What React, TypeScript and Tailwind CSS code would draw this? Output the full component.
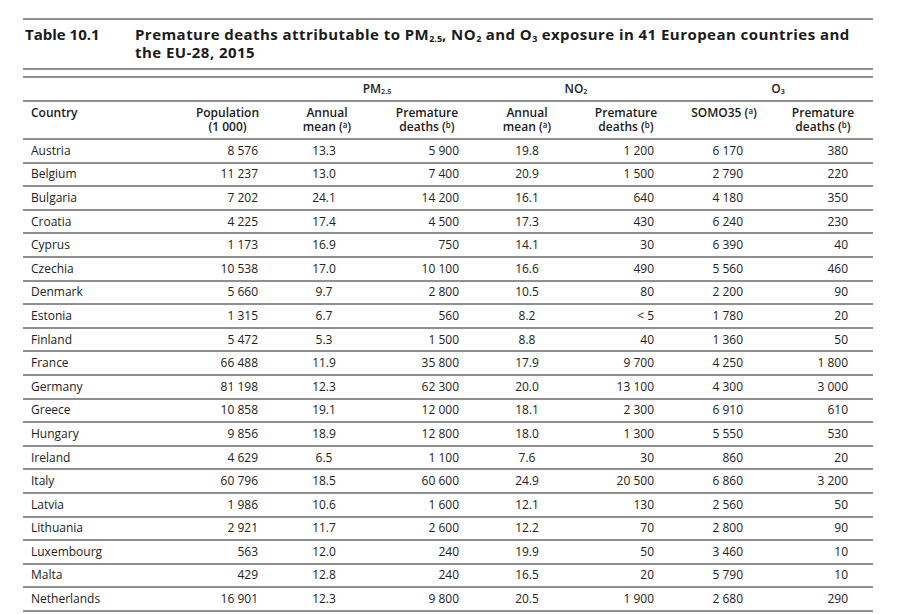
import React from 'react';

// widths of the eight columns, left to right
const COLS = ['w-[155px]', 'w-[99px]', 'w-[100px]', 'w-[100px]', 'w-[100px]', 'w-[98px]', 'w-[98px]', 'w-[100px]'];

// how each data column is aligned
const CELL = [
  'text-left pl-[8px]',
  'text-right pr-[19px]',
  'text-center pr-[6px]',
  'text-right pr-[18px]',
  'text-center',
  'text-right pr-[21px]',
  'text-right pr-[30px]',
  'text-right pr-[25px]',
];

const rows: string[][] = [
  ['Austria', '8 576', '13.3', '5 900', '19.8', '1 200', '6 170', '380'],
  ['Belgium', '11 237', '13.0', '7 400', '20.9', '1 500', '2 790', '220'],
  ['Bulgaria', '7 202', '24.1', '14 200', '16.1', '640', '4 180', '350'],
  ['Croatia', '4 225', '17.4', '4 500', '17.3', '430', '6 240', '230'],
  ['Cyprus', '1 173', '16.9', '750', '14.1', '30', '6 390', '40'],
  ['Czechia', '10 538', '17.0', '10 100', '16.6', '490', '5 560', '460'],
  ['Denmark', '5 660', '9.7', '2 800', '10.5', '80', '2 200', '90'],
  ['Estonia', '1 315', '6.7', '560', '8.2', '< 5', '1 780', '20'],
  ['Finland', '5 472', '5.3', '1 500', '8.8', '40', '1 360', '50'],
  ['France', '66 488', '11.9', '35 800', '17.9', '9 700', '4 250', '1 800'],
  ['Germany', '81 198', '12.3', '62 300', '20.0', '13 100', '4 300', '3 000'],
  ['Greece', '10 858', '19.1', '12 000', '18.1', '2 300', '6 910', '610'],
  ['Hungary', '9 856', '18.9', '12 800', '18.0', '1 300', '5 550', '530'],
  ['Ireland', '4 629', '6.5', '1 100', '7.6', '30', '860', '20'],
  ['Italy', '60 796', '18.5', '60 600', '24.9', '20 500', '6 860', '3 200'],
  ['Latvia', '1 986', '10.6', '1 600', '12.1', '130', '2 560', '50'],
  ['Lithuania', '2 921', '11.7', '2 600', '12.2', '70', '2 800', '90'],
  ['Luxembourg', '563', '12.0', '240', '19.9', '50', '3 460', '10'],
  ['Malta', '429', '12.8', '240', '16.5', '20', '5 790', '10'],
  ['Netherlands', '16 901', '12.3', '9 800', '20.5', '1 900', '2 680', '290'],
];

const Rule = () => <div className="h-[2px] bg-[#8f8f8f]" />;

// footnote marker: normal brackets, small raised letter
const Note = ({ c }: { c: string }) => (
  <span>
    (<span className="text-[8px] leading-none align-[3px]">{c}</span>)
  </span>
);

const Sub = ({ children }: { children: React.ReactNode }) => (
  <span className="text-[0.6em] leading-none align-[-0.2em] tracking-normal">{children}</span>
);

const headers: React.ReactNode[] = [
  'Country',
  <>Population<br />(1 000)</>,
  <>Annual<br />mean <Note c="a" /></>,
  <>Premature<br />deaths <Note c="b" /></>,
  <>Annual<br />mean <Note c="a" /></>,
  <>Premature<br />deaths <Note c="b" /></>,
  <>SOMO35 <Note c="a" /></>,
  <>Premature<br />deaths <Note c="b" /></>,
];

export default function App() {
  return (
    <div
      className="w-[900px] h-[614px] bg-white overflow-hidden pt-[18px] pl-[23px] text-[#222]"
      style={{ fontFamily: '"Open Sans", "Noto Sans", sans-serif' }}
    >
      <div className="w-[850px]">
        <Rule />
        <div className="flex pt-[5px] pb-[7px] text-[15px] leading-[18px] font-bold text-[#1b1b1b]">
          <div className="w-[112px] pl-[2px]">Table 10.1</div>
          <div className="flex-1 tracking-[0.45px]">
            Premature deaths attributable to PM<Sub>2.5</Sub>, NO<Sub>2</Sub> and O<Sub>3</Sub> exposure in 41 European countries and
            <br />
            the EU-28, 2015
          </div>
        </div>
        <Rule />
        <div className="h-[6px]" />
        <Rule />

        {/* pollutant groups */}
        <div className="flex h-[22px] items-center text-[12px] font-semibold">
          <div className="w-[254px]" />
          <div className="w-[200px] text-center">PM<Sub>2.5</Sub></div>
          <div className="w-[198px] text-center">NO<Sub>2</Sub></div>
          <div className="w-[198px] text-center pl-[8px]">O<Sub>3</Sub></div>
        </div>
        <Rule />

        {/* column headings */}
        <div className="flex h-[36px] pt-[4px] text-[12px] leading-[14px] font-semibold text-[#1b1b1b]">
          {headers.map((h, i) => (
            <div key={i} className={`${COLS[i]} ${i === 0 ? 'text-left pl-[8px]' : 'text-center'}`}>
              {h}
            </div>
          ))}
        </div>
        <Rule />

        {rows.map((r) => (
          <div key={r[0]}>
            <div className="flex h-[21.6px] items-center text-[12px]">
              {r.map((v, i) => (
                <div key={i} className={`${COLS[i]} ${CELL[i]}`}>
                  {v}
                </div>
              ))}
            </div>
            <Rule />
          </div>
        ))}
      </div>
    </div>
  );
}
